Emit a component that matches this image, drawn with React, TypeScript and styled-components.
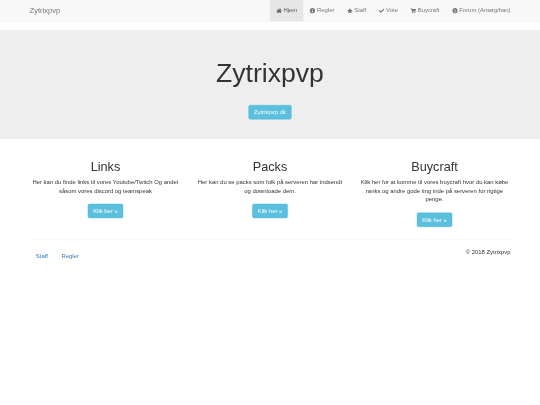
import React from "react";
import styled, { createGlobalStyle } from "styled-components";
import { FaHome, FaInfoCircle, FaStar, FaCheck, FaShoppingCart } from "react-icons/fa";

const Global = createGlobalStyle`
  html, body { margin: 0; padding: 0; background: #fff; }
  * { box-sizing: border-box; }
`;

const Viewport = styled.div`
  width: 540px;
  height: 405px;
  overflow: hidden;
`;

const Page = styled.div`
  width: 1280px;
  transform: scale(0.421875);
  transform-origin: 0 0;
  font-family: "Liberation Sans", Arial, sans-serif;
  font-size: 14px;
  line-height: 1.42857;
  color: #333;
  filter: blur(1px);
`;

const Navbar = styled.nav`
  height: 51px;
  margin-bottom: 20px;
  background: #f8f8f8;
  border-bottom: 1px solid #e7e7e7;
`;

const Container = styled.div`
  width: 1170px;
  margin: 0 auto;
  padding: 0 15px;
`;

const NavInner = styled(Container)`
  display: flex;
  justify-content: space-between;
  padding: 0;
`;

const Brand = styled.a`
  padding: 15px;
  font-size: 18px;
  line-height: 20px;
  color: #777;
`;

const NavList = styled.div`
  display: flex;
`;

const NavItem = styled.a<{ $active?: boolean }>`
  display: flex;
  align-items: center;
  gap: 4px;
  height: 50px;
  padding: 0 15px;
  color: ${(p) => (p.$active ? "#555" : "#777")};
  background: ${(p) => (p.$active ? "#e7e7e7" : "transparent")};
  svg { width: 13px; height: 13px; }
`;

const Jumbotron = styled.section`
  height: 259px;
  padding-top: 48px;
  margin-bottom: 28px;
  background: #eee;
  text-align: center;
`;

const Title = styled.h1`
  margin: 20px 0 41px;
  font-size: 63px;
  font-weight: 500;
  line-height: 1.1;
  color: #333;
`;

const Button = styled.a`
  display: inline-block;
  padding: 6px 12px;
  font-size: 14px;
  line-height: 20px;
  color: #fff;
  background: #5bc0de;
  border: 1px solid #46b8da;
  border-radius: 4px;
`;

const Columns = styled.div`
  display: grid;
  grid-template-columns: repeat(3, 1fr);
  margin: 0 -15px;
`;

const Column = styled.div`
  padding: 0 15px;
  text-align: center;
`;

const Heading = styled.h2`
  margin: 20px 0 10px;
  font-size: 30px;
  font-weight: 500;
  line-height: 1.1;
`;

const Text = styled.p`
  margin: 0 0 10px;
  line-height: 20.5px;
`;

const ButtonRow = styled.p`
  margin: 21px 0 10px;
`;

const Rule = styled.hr`
  margin: 19px 0 20px;
  border: 0;
  border-top: 1px solid #eee;
`;

const Footer = styled.footer`
  display: flex;
  justify-content: space-between;
  align-items: flex-start;
`;

const Pills = styled.div`
  display: flex;
  gap: 2px;
`;

const Pill = styled.a`
  padding: 10px 15px;
  color: #337ab7;
`;

const Copy = styled.p`
  margin: 0 0 10px;
`;

const links: [string, React.ReactNode][] = [
  ["Hjem", <FaHome />],
  ["Regler", <FaInfoCircle />],
  ["Staff", <FaStar />],
  ["Vote", <FaCheck />],
  ["Buycraft", <FaShoppingCart />],
  ["Forum (Ansøg/ban)", <FaInfoCircle />],
];

const cols = [
  ["Links", "Her kan du finde links til vores Youtube/Twitch Og andet såsom vores discord og teamspeak"],
  ["Packs", "Her kan du se packs som folk på serveren har indsendt og downloade dem."],
  ["Buycraft", "Klik her for at komme til vores buycraft hvor du kan købe ranks og andre gode ting inde på serveren for rigtige penge."],
];

export default function App() {
  return (
    <Viewport>
      <Global />
      <Page>
        <Navbar>
          <NavInner>
            <Brand>Zytrixpvp</Brand>
            <NavList>
              {links.map(([label, icon], i) => (
                <NavItem key={label} $active={i === 0}>
                  {icon}
                  {label}
                </NavItem>
              ))}
            </NavList>
          </NavInner>
        </Navbar>
        <Jumbotron>
          <Title>Zytrixpvp</Title>
          <Button>Zytrixpvp.dk</Button>
        </Jumbotron>
        <Container>
          <Columns>
            {cols.map(([title, body]) => (
              <Column key={title}>
                <Heading>{title}</Heading>
                <Text>{body}</Text>
                <ButtonRow>
                  <Button>Klik her »</Button>
                </ButtonRow>
              </Column>
            ))}
          </Columns>
          <Rule />
          <Footer>
            <Pills>
              <Pill>Staff</Pill>
              <Pill>Regler</Pill>
            </Pills>
            <Copy>© 2018 Zytrixpvp</Copy>
          </Footer>
        </Container>
      </Page>
    </Viewport>
  );
}
